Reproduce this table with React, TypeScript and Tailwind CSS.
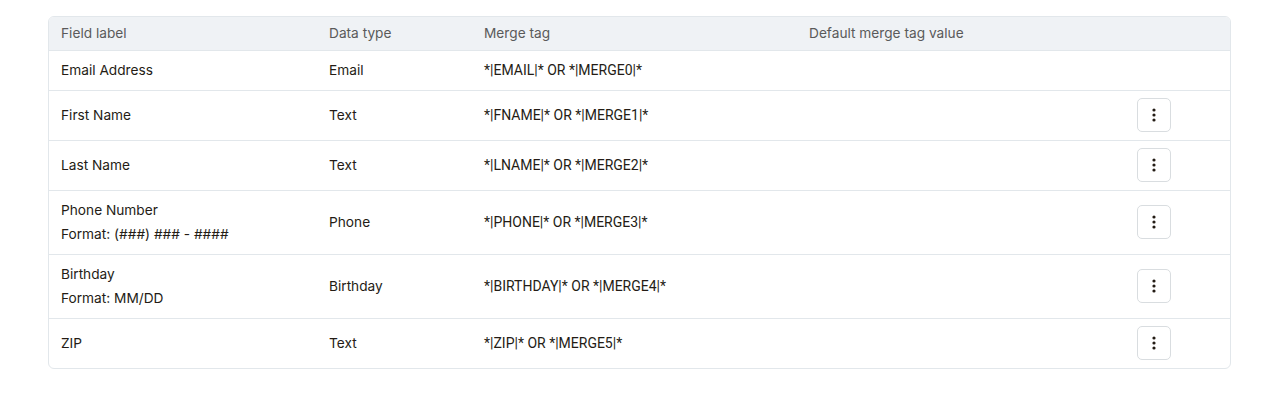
import React from 'react';

const rows = [
  { label: 'Email Address', type: 'Email', tag: '*|EMAIL|* OR *|MERGE0|*', action: false },
  { label: 'First Name', type: 'Text', tag: '*|FNAME|* OR *|MERGE1|*', action: true },
  { label: 'Last Name', type: 'Text', tag: '*|LNAME|* OR *|MERGE2|*', action: true },
  { label: 'Phone Number', format: 'Format: (###) ### - ####', type: 'Phone', tag: '*|PHONE|* OR *|MERGE3|*', action: true },
  { label: 'Birthday', format: 'Format: MM/DD', type: 'Birthday', tag: '*|BIRTHDAY|* OR *|MERGE4|*', action: true },
  { label: 'ZIP', type: 'Text', tag: '*|ZIP|* OR *|MERGE5|*', action: true },
];

const DotsIcon = () => (
  <svg width="4" height="14" viewBox="0 0 4 14" fill="#241c15">
    <circle cx="2" cy="2" r="1.6" />
    <circle cx="2" cy="7" r="1.6" />
    <circle cx="2" cy="12" r="1.6" />
  </svg>
);

const App = () => {
  return (
    <div className="w-full min-h-[399px] bg-white px-[48px] pt-[16px] font-['Inter',sans-serif] text-[13.7px] text-[#241c15]">
      <div className="w-[1183px] rounded-[6px] border border-[#e2e7eb] overflow-hidden">
        <table className="w-full table-fixed border-collapse">
          <colgroup>
            <col className="w-[268px]" />
            <col className="w-[155px]" />
            <col className="w-[325px]" />
            <col />
            <col className="w-[152px]" />
          </colgroup>
          <thead>
            <tr className="bg-[#eff2f5] text-[#5a5a5a] text-left">
              <th className="font-normal px-[12px] h-[33px]">Field label</th>
              <th className="font-normal px-[12px]">Data type</th>
              <th className="font-normal px-[12px]">Merge tag</th>
              <th className="font-normal px-[12px]">Default merge tag value</th>
              <th></th>
            </tr>
          </thead>
          <tbody>
            {rows.map((r) => (
              <tr
                key={r.label}
                className={
                  (r.format ? 'h-[64px] ' : r.action ? 'h-[50px] ' : 'h-[40px] ') +
                  'border-t border-[#e2e7eb]'
                }
              >
                <td className="px-[12px] align-middle">
                  {r.format ? (
                    <div className="leading-[24px]">
                      <div>{r.label}</div>
                      <div>{r.format}</div>
                    </div>
                  ) : (
                    r.label
                  )}
                </td>
                <td className="px-[12px]">{r.type}</td>
                <td className="px-[12px] font-['Roboto',Arial,sans-serif] text-[14px]">{r.tag}</td>
                <td className="px-[12px]"></td>
                <td className="text-center">
                  {r.action && (
                    <button className="inline-flex h-[34px] w-[34px] items-center justify-center rounded-[5px] border border-[#d9dde0] bg-white align-middle">
                      <DotsIcon />
                    </button>
                  )}
                </td>
              </tr>
            ))}
          </tbody>
        </table>
      </div>
    </div>
  );
};

export default App;
